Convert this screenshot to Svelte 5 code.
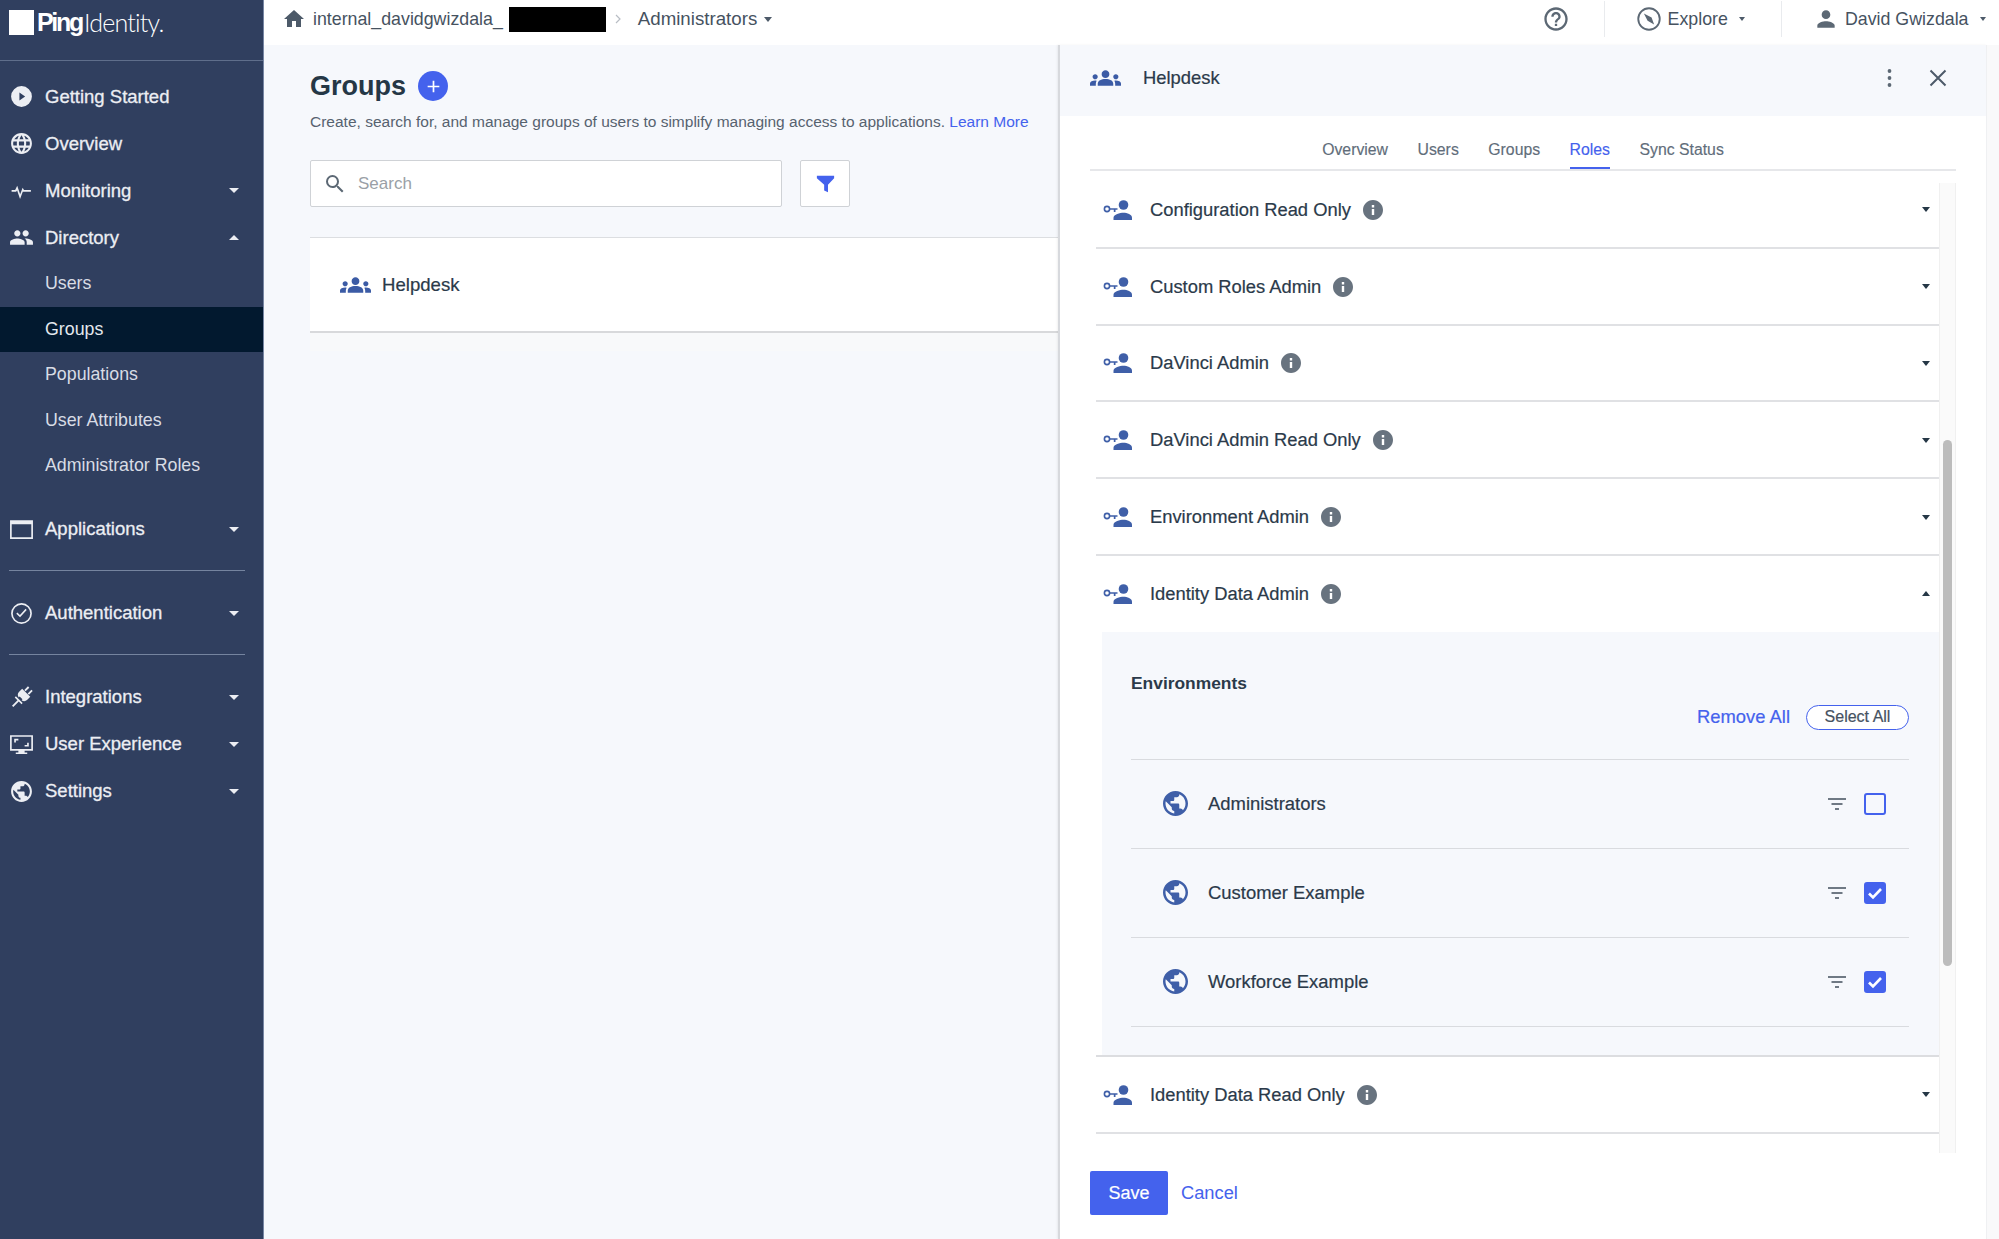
<script>
	const paths = {
		play: 'M12 2a10 10 0 1 0 0 20 10 10 0 0 0 0-20zM10 8.2v7.6l5.5-3.8z',
		language:
			'M11.99 2C6.47 2 2 6.48 2 12s4.47 10 9.99 10C17.52 22 22 17.52 22 12S17.52 2 11.99 2zm6.93 6h-2.95c-.32-1.25-.78-2.45-1.38-3.56 1.84.63 3.37 1.91 4.33 3.56zM12 4.04c.83 1.2 1.48 2.53 1.91 3.96h-3.82c.43-1.43 1.08-2.76 1.91-3.96zM4.26 14C4.1 13.36 4 12.69 4 12s.1-1.36.26-2h3.38c-.08.66-.14 1.32-.14 2 0 .68.06 1.34.14 2H4.26zm.82 2h2.95c.32 1.25.78 2.45 1.38 3.56-1.84-.63-3.37-1.9-4.33-3.56zm2.95-8H5.08c.96-1.66 2.49-2.93 4.33-3.56C8.81 5.55 8.35 6.75 8.03 8zM12 19.96c-.83-1.2-1.48-2.53-1.91-3.96h3.82c-.43 1.43-1.08 2.76-1.91 3.96zM14.34 14H9.66c-.09-.66-.16-1.32-.16-2 0-.68.07-1.35.16-2h4.68c.09.65.16 1.32.16 2 0 .68-.07 1.34-.16 2zm.25 5.56c.6-1.11 1.06-2.31 1.38-3.56h2.95c-.96 1.65-2.49 2.93-4.33 3.56zM16.36 14c.08-.66.14-1.32.14-2 0-.68-.06-1.34-.14-2h3.38c.16.64.26 1.31.26 2s-.1 1.36-.26 2h-3.38z',
		pulse: 'M2.5 11.4h3.4l2-3.9 2.8 8.2 2.4-6.4 1.3 2.1h6.6v1.8h-7.6l-.1-.2-2.7 7.2-2.8-8.2-1 1.2H2.5z',
		people:
			'M16 11c1.66 0 2.99-1.34 2.99-3S17.66 5 16 5c-1.66 0-3 1.34-3 3s1.34 3 3 3zm-8 0c1.66 0 2.99-1.34 2.99-3S9.66 5 8 5C6.34 5 5 6.34 5 8s1.34 3 3 3zm0 2c-2.33 0-7 1.17-7 3.5V19h14v-2.5c0-2.33-4.67-3.5-7-3.5zm8 0c-.29 0-.62.02-.97.05 1.16.84 1.97 1.97 1.97 3.45V19h6v-2.5c0-2.33-4.67-3.5-7-3.5z',
		window: 'M1 3h22v18H1zM2.6 7v12.4h18.8V7z',
		check: 'M12 2a10 10 0 1 0 0 20 10 10 0 0 0 0-20zm0 1.6a8.4 8.4 0 1 1 0 16.8 8.4 8.4 0 0 1 0-16.8zM17 8.6l-6.4 7-3.6-3.4 1-1.1 2.5 2.3 5.4-5.9z',
		plug: 'M8.8 0h1.8v5h-1.8zM13.4 0h1.8v5h-1.8zM6.5 5.6h11V10c0 2-1.6 3.6-3.6 3.8v-1.2h-3.8v1.2C8.1 13.6 6.5 12 6.5 10zM7.4 15h9.2v1.6h-3.7V24h-1.8v-7.4H7.4z',
		monitor:
			'M1 3h22v15h-8v1.6h2.5V21h-11v-1.4H9V18H1zm1.6 1.6v11.8h18.8V4.6zM5 6.5h4v1.6H6.6v2H5zM19 14h-4v-1.6h2.4v-2H19z',
		earth:
			'M12 2C6.48 2 2 6.48 2 12s4.48 10 10 10 10-4.48 10-10S17.52 2 12 2zm-1 17.93c-3.95-.49-7-3.85-7-7.93 0-.62.08-1.21.21-1.79L9 15v1c0 1.1.9 2 2 2v1.93zm6.9-2.54c-.26-.81-1-1.39-1.9-1.39h-1v-3c0-.55-.45-1-1-1H8v-2h2c.55 0 1-.45 1-1V7h2c1.1 0 2-.9 2-2v-.41c2.93 1.19 5 4.06 5 7.41 0 2.08-.8 3.97-2.1 5.39z',
		home: 'M10 20v-6h4v6h5v-8h3L12 3 2 12h3v8z',
		help: 'M11 18h2v-2h-2v2zm1-16C6.48 2 2 6.48 2 12s4.48 10 10 10 10-4.48 10-10S17.52 2 12 2zm0 18c-4.41 0-8-3.59-8-8s3.59-8 8-8 8 3.59 8 8-3.59 8-8 8zm0-14c-2.21 0-4 1.79-4 4h2c0-1.1.9-2 2-2s2 .9 2 2c0 2-3 1.75-3 5h2c0-2.25 3-2.5 3-5 0-2.21-1.79-4-4-4z',
		compass:
			'M12 2a10 10 0 1 0 0 20 10 10 0 0 0 0-20zm0 1.6a8.4 8.4 0 1 1 0 16.8 8.4 8.4 0 0 1 0-16.8zM7.6 7.2l6.6 3.6 2.2 6-5.6-3.4z',
		person: 'M12 12c2.21 0 4-1.79 4-4s-1.79-4-4-4-4 1.79-4 4 1.79 4 4 4zm0 2c-2.67 0-8 1.34-8 4v2h16v-2c0-2.66-5.33-4-8-4z',
		group:
			'M12 12.75c1.63 0 3.07.39 4.24.9 1.08.48 1.76 1.56 1.76 2.73V18H6v-1.61c0-1.18.68-2.26 1.76-2.73 1.17-.52 2.61-.91 4.24-.91zM4 13c1.1 0 2-.9 2-2s-.9-2-2-2-2 .9-2 2 .9 2 2 2zm1.13 1.1c-.37-.06-.74-.1-1.13-.1-.99 0-1.93.21-2.78.58C.48 14.9 0 15.62 0 16.43V18h4.5v-1.61c0-.83.23-1.61.63-2.29zM20 13c1.1 0 2-.9 2-2s-.9-2-2-2-2 .9-2 2 .9 2 2 2zm4 3.43c0-.81-.48-1.53-1.22-1.85-.85-.37-1.79-.58-2.78-.58-.39 0-.76.04-1.13.1.4.68.63 1.46.63 2.29V18H24v-1.57zM12 6c1.66 0 3 1.34 3 3s-1.34 3-3 3-3-1.34-3-3 1.34-3 3-3z',
		info: 'M12 2C6.48 2 2 6.48 2 12s4.48 10 10 10 10-4.48 10-10S17.52 2 12 2zm1.2 15h-2.4v-6h2.4v6zm0-7.6h-2.4V7h2.4v2.4z',
		funnel: 'M3 4h18v2.6l-6.4 6.6V21l-4 -1.8v-6L3 6.6z',
		search: 'M15.5 14h-.79l-.28-.27A6.47 6.47 0 0 0 16 9.5 6.5 6.5 0 1 0 9.5 16c1.61 0 3.09-.59 4.23-1.57l.27.28v.79l5 4.99L20.49 19l-4.99-5zm-6 0C7.01 14 5 11.99 5 9.5S7.01 5 9.5 5 14 7.01 14 9.5 11.99 14 9.5 14z'
	};

	const topNav = [
		{ label: 'Getting Started', icon: 'play' },
		{ label: 'Overview', icon: 'language' },
		{ label: 'Monitoring', icon: 'pulse', caret: true },
		{ label: 'Directory', icon: 'people', caret: true, open: true }
	];
	const directory = ['Users', 'Groups', 'Populations', 'User Attributes', 'Administrator Roles'];
	const lowerNav = [
		{ label: 'Integrations', icon: 'plug', rotate: true, caret: true },
		{ label: 'User Experience', icon: 'monitor', caret: true },
		{ label: 'Settings', icon: 'earth', caret: true }
	];

	const tabs = ['Overview', 'Users', 'Groups', 'Roles', 'Sync Status'];
	const rolesAbove = [
		'Configuration Read Only',
		'Custom Roles Admin',
		'DaVinci Admin',
		'DaVinci Admin Read Only',
		'Environment Admin'
	];
	const environments = [
		{ name: 'Administrators', checked: false },
		{ name: 'Customer Example', checked: true },
		{ name: 'Workforce Example', checked: true }
	];
</script>

{#snippet icon(name, cls)}
	<svg class={cls} viewBox="0 0 24 24" aria-hidden="true"><path fill-rule="evenodd" d={paths[name]} /></svg>
{/snippet}

{#snippet navRow(item)}
	<div class="nav-row">
		<svg class="nav-icon" viewBox="0 0 24 24" aria-hidden="true">
			<path fill-rule="evenodd" d={paths[item.icon]} transform={item.rotate ? 'rotate(45 12 12)' : undefined} />
		</svg>
		<span>{item.label}</span>
		{#if item.caret}
			<i class="caret light" class:up={item.open}></i>
		{/if}
	</div>
{/snippet}

{#snippet roleRow(name, open)}
	<div class="role-row">
		<svg class="role-icon" viewBox="0 0 29 20" aria-hidden="true">
			<circle cx="4" cy="9" r="2.6" fill="none" stroke="currentColor" stroke-width="1.6" />
			<path d="M6.5 8.2h8v1.6h-2v2.2h-1.7V9.8H6.5z" />
			<circle cx="20.5" cy="5" r="4.8" />
			<path d="M10.5 20v-2.2c0-3.2 6.5-5 10-5s8.5 1.8 8.5 5V20z" />
		</svg>
		<span class="role-name">{name}</span>
		<svg class="info" viewBox="2 2 20 20" aria-hidden="true"><path fill-rule="evenodd" d={paths.info} /></svg>
		<i class="caret dark" class:up={open}></i>
	</div>
{/snippet}

<div class="app">
	<aside class="sidebar">
		<div class="logo">
			<span class="logo-mark"></span>
			<span class="logo-ping">Ping</span><span class="logo-identity">Identity.</span>
		</div>

		<nav>
			{#each topNav as item}
				{@render navRow(item)}
			{/each}
			{#each directory as sub}
				<div class="sub-row" class:active={sub === 'Groups'}>{sub}</div>
			{/each}

			<div class="nav-block">
				{@render navRow({ label: 'Applications', icon: 'window', caret: true })}
			</div>
			<hr />
			{@render navRow({ label: 'Authentication', icon: 'check', caret: true })}
			<hr />
			{#each lowerNav as item}
				{@render navRow(item)}
			{/each}
		</nav>
	</aside>

	<div class="main">
		<header class="topbar">
			{@render icon('home', 'home')}
			<span class="crumb">internal_davidgwizdala_</span>
			<span class="redacted"></span>
			<svg class="chevron" viewBox="0 0 6 10" aria-hidden="true"><path d="M1 1l4 4-4 4" /></svg>
			<span class="crumb env">Administrators</span>
			<i class="caret grey"></i>

			<div class="top-right">
				{@render icon('help', 'top-icon')}
				<span class="top-sep"></span>
				{@render icon('compass', 'top-icon explore-icon')}
				<span class="crumb explore">Explore</span>
				<i class="caret tiny"></i>
				<span class="top-sep second"></span>
				{@render icon('person', 'user-icon')}
				<span class="crumb user">David Gwizdala</span>
				<i class="caret tiny"></i>
			</div>
		</header>

		<div class="body">
			<section class="groups">
				<div class="title-row">
					<h1>Groups</h1>
					<span class="add">
						<svg viewBox="0 0 16 16" aria-hidden="true"><path d="M8 2.5v11M2.5 8h11" /></svg>
					</span>
				</div>
				<p class="desc">
					Create, search for, and manage groups of users to simplify managing access to applications.
					<a href="#learn">Learn More</a>
				</p>
				<div class="search-row">
					<label class="search">
						{@render icon('search', 'search-icon')}
						<input type="text" placeholder="Search" />
					</label>
					<button class="filter" aria-label="Filter">
						{@render icon('funnel', 'funnel')}
					</button>
				</div>
				<div class="card">
					<svg class="group-icon" viewBox="0 5.5 24 13" aria-hidden="true"><path d={paths.group} /></svg>
					<span>Helpdesk</span>
				</div>
				<div class="card-foot"></div>
			</section>

			<section class="panel">
				<div class="panel-head">
					<svg class="group-icon" viewBox="0 5.5 24 13" aria-hidden="true"><path d={paths.group} /></svg>
					<span class="panel-title">Helpdesk</span>
					<svg class="kebab" viewBox="0 0 4 20" aria-hidden="true">
						<circle cx="2" cy="3" r="1.9" /><circle cx="2" cy="10" r="1.9" /><circle cx="2" cy="17" r="1.9" />
					</svg>
					<svg class="close" viewBox="0 0 18 18" aria-hidden="true"><path d="M1.5 1.5l15 15M16.5 1.5l-15 15" /></svg>
				</div>

				<div class="tabs">
					{#each tabs as tab}
						<span class="tab" class:current={tab === 'Roles'}>{tab}</span>
					{/each}
				</div>

				<div class="scroller">
					<div class="roles">
						{#each rolesAbove as role}
							{@render roleRow(role, false)}
						{/each}

						<div class="role-open">
							{@render roleRow('Identity Data Admin', true)}
							<div class="env-box">
								<h2>Environments</h2>
								<div class="env-actions">
									<a href="#remove">Remove All</a>
									<span class="pill">Select All</span>
								</div>
								{#each environments as env}
									<div class="env-row">
										<svg class="globe" viewBox="2 2 20 20" aria-hidden="true"><path d={paths.earth} /></svg>
										<span class="env-name">{env.name}</span>
										<svg class="lines" viewBox="0 0 18 12" aria-hidden="true"><path d="M0 1h18M3.5 6h11M7 11h4" /></svg>
										<span class="box" class:checked={env.checked}>
											{#if env.checked}
												<svg viewBox="0 0 22 22" aria-hidden="true"><path d="M5 11.5l4 4 8-8.5" /></svg>
											{/if}
										</span>
									</div>
								{/each}
							</div>
						</div>

						{@render roleRow('Identity Data Read Only', false)}
					</div>
					<div class="track"><div class="thumb"></div></div>
				</div>

				<div class="actions">
					<button class="save">Save</button>
					<a href="#cancel">Cancel</a>
				</div>
			</section>

			<div class="edge"></div>
		</div>
	</div>
</div>

<style>
	:global(body) {
		margin: 0;
		background: #f6f8fc;
	}

	.app {
		display: flex;
		height: 1239px;
		overflow: hidden;
		font-family: 'Liberation Sans', Arial, sans-serif;
		color: #2b3a4a;
	}

	/* sidebar */
	.sidebar {
		width: 263px;
		flex: none;
		background: #303f5f;
		border-right: 1px solid #7786a3;
		color: #eceef3;
	}

	.logo {
		height: 61px;
		box-sizing: border-box;
		border-bottom: 1px solid #5f6e8b;
		padding: 10px 0 0 9px;
		display: flex;
		align-items: flex-start;
		color: #fff;
		line-height: 25px;
		font-size: 25px;
	}

	.logo-mark {
		width: 25px;
		height: 25px;
		background: #fff;
		margin-right: 3px;
	}

	.logo-ping {
		font-weight: 700;
		letter-spacing: -2.3px;
		margin-right: 2px;
	}

	.logo-identity {
		font-family: Lato, sans-serif;
		font-weight: 300;
		letter-spacing: -0.8px;
	}

	nav {
		padding-top: 12.4px;
	}

	.nav-row {
		height: 47px;
		display: flex;
		align-items: center;
		padding: 0 24px 0 9px;
		font-size: 18.5px;
		-webkit-text-stroke: 0.3px currentColor;
	}

	.nav-row span {
		margin-left: 11px;
		flex: 1;
	}

	.nav-icon {
		width: 25px;
		height: 25px;
		fill: #eceef3;
	}

	.sub-row {
		height: 45.4px;
		line-height: 45.4px;
		padding-left: 45px;
		font-size: 17.8px;
		color: #d8dce5;
	}

	.sub-row.active {
		background: #02192f;
		color: #e4e8ee;
	}

	.nav-block {
		margin-top: 17.5px;
	}

	hr {
		border: 0;
		height: 1px;
		background: #75849f;
		margin: 17.5px 18px 18.5px 9px;
	}

	.caret {
		display: inline-block;
		width: 0;
		height: 0;
		border-left: 5px solid transparent;
		border-right: 5px solid transparent;
		border-top: 5px solid currentColor;
		flex: none;
	}

	.caret.up {
		border-top: 0;
		border-bottom: 5px solid currentColor;
	}

	.caret.light {
		color: #eceef3;
	}

	.caret.dark {
		color: #253746;
		border-left-width: 4.5px;
		border-right-width: 4.5px;
		margin-left: auto;
		margin-right: 9px;
	}

	.caret.grey {
		color: #4d5a69;
		margin-left: 7px;
		border-left-width: 4.5px;
		border-right-width: 4.5px;
	}

	.caret.tiny {
		color: #4d5a69;
		border-left-width: 3.5px;
		border-right-width: 3.5px;
		border-top-width: 4px;
	}

	/* main column */
	.main {
		flex: 1;
		min-width: 0;
		display: flex;
		flex-direction: column;
	}

	.topbar {
		height: 45px;
		flex: none;
		background: #fff;
		display: flex;
		align-items: center;
		padding: 0 13.5px 7px 18px;
		box-sizing: border-box;
	}

	.home {
		width: 24px;
		height: 24px;
		fill: #4d5a69;
		margin-right: 7px;
	}

	.crumb {
		font-size: 17.8px;
		color: #46525f;
		white-space: nowrap;
	}

	.crumb.env {
		font-size: 18.7px;
	}

	.redacted {
		width: 97px;
		height: 25px;
		background: #000;
		margin-left: 6px;
	}

	.chevron {
		width: 6px;
		height: 10px;
		margin: 0 17px 0 9px;
		fill: none;
		stroke: #b8bdc4;
		stroke-width: 1.2;
	}

	.top-right {
		margin-left: auto;
		display: flex;
		align-items: center;
	}

	.top-icon {
		width: 28px;
		height: 28px;
		fill: #5c6874;
	}

	.top-sep {
		width: 1px;
		height: 36px;
		background: #e9ebee;
		margin: 0 30.4px 0 34px;
	}

	.top-sep.second {
		margin: 0 31px 0 36.5px;
	}

	.explore {
		margin: 0 11px 0 4.6px;
	}

	.user-icon {
		width: 26px;
		height: 26px;
		fill: #5c6874;
		margin-right: 5.6px;
	}

	.user {
		margin-right: 11px;
	}

	.body {
		flex: 1;
		display: flex;
		min-height: 0;
	}

	/* groups list */
	.groups {
		width: 794px;
		flex: none;
		box-sizing: border-box;
		padding: 24px 0 0 46px;
	}

	.title-row {
		display: flex;
		align-items: center;
		height: 34px;
	}

	h1 {
		margin: 0;
		font-size: 27px;
		line-height: 34px;
		font-weight: 700;
		color: #253746;
	}

	.add {
		width: 30px;
		height: 30px;
		border-radius: 50%;
		background: #4462ed;
		margin-left: 12px;
		display: flex;
		align-items: center;
		justify-content: center;
	}

	.add svg {
		width: 17px;
		height: 17px;
		fill: none;
		stroke: #fff;
		stroke-width: 1.6;
	}

	.desc {
		margin: 9px 0 0;
		font-size: 15.5px;
		line-height: 20px;
		color: #56626f;
		white-space: nowrap;
	}

	a {
		color: #4462ed;
		text-decoration: none;
	}

	.search-row {
		display: flex;
		gap: 18px;
		margin-top: 28px;
	}

	.search {
		width: 472px;
		height: 47px;
		box-sizing: border-box;
		background: #fff;
		border: 1px solid #cfd2d6;
		border-radius: 2px;
		display: flex;
		align-items: center;
		padding-left: 12px;
	}

	.search-icon {
		width: 24px;
		height: 24px;
		fill: #5c6874;
		flex: none;
	}

	.search input {
		border: 0;
		outline: 0;
		background: none;
		margin-left: 11px;
		padding: 0;
		font: 17px 'Liberation Sans', Arial, sans-serif;
		flex: 1;
		min-width: 0;
	}

	.search input::placeholder {
		color: #9a9fa6;
		opacity: 1;
	}

	.filter {
		width: 50px;
		height: 47px;
		padding: 0;
		background: #fff;
		border: 1px solid #cfd2d6;
		border-radius: 2px;
		display: flex;
		align-items: center;
		justify-content: center;
	}

	.funnel {
		width: 23px;
		height: 23px;
		fill: #4462ed;
	}

	.card {
		margin-top: 30px;
		height: 96px;
		box-sizing: border-box;
		background: #fff;
		border-top: 1px solid #dcdee1;
		border-bottom: 2px solid #d8d9db;
		display: flex;
		align-items: center;
		padding-left: 30px;
		gap: 11px;
		font-size: 18.6px;
		-webkit-text-stroke: 0.2px currentColor;
	}

	.card-foot {
		height: 18px;
		background: #f8f9fa;
	}

	.group-icon {
		width: 31px;
		height: 18px;
		fill: #3b5ba5;
		flex: none;
	}

	/* detail panel */
	.panel {
		width: 929px;
		flex: none;
		box-sizing: border-box;
		background: #fff;
		border-left: 2px solid #d7d9dd;
		border-right: 1px solid #eff0f2;
		box-shadow: -1px 0 2px rgba(0, 0, 0, 0.06);
		display: flex;
		flex-direction: column;
		min-height: 0;
	}

	.panel-head {
		height: 71px;
		flex: none;
		background: #f6f8fc;
		display: flex;
		align-items: center;
		padding: 0 39px 5px 30px;
		box-sizing: border-box;
	}

	.panel-title {
		margin-left: 22px;
		font-size: 18.4px;
		-webkit-text-stroke: 0.2px currentColor;
		flex: 1;
	}

	.kebab {
		width: 5px;
		height: 20px;
		fill: #5c6874;
		margin-right: 37px;
	}

	.close {
		width: 18px;
		height: 18px;
		fill: none;
		stroke: #4d5a69;
		stroke-width: 2;
	}

	.tabs {
		height: 55px;
		flex: none;
		box-sizing: border-box;
		margin: 0 30px;
		border-bottom: 2px solid #e6e7ea;
		display: flex;
		justify-content: center;
		gap: 29.5px;
		padding-top: 24px;
		font-size: 15.8px;
		color: #616d7a;
		-webkit-text-stroke: 0.15px currentColor;
	}

	.tab {
		height: 29px;
		line-height: 20px;
		box-sizing: border-box;
	}

	.tab.current {
		color: #4462ed;
		border-bottom: 2px solid #4462ed;
	}

	.scroller {
		height: 981px;
		flex: none;
		margin-top: 1px;
		padding-left: 36px;
		display: flex;
		overflow: hidden;
	}

	.roles {
		width: 843px;
		flex: none;
	}

	.role-row {
		height: 76.8px;
		box-sizing: border-box;
		border-bottom: 2px solid #e0e1e4;
		display: flex;
		align-items: center;
		padding: 1px 0 0 7px;
		font-size: 18.35px;
		-webkit-text-stroke: 0.2px currentColor;
	}

	.role-open .role-row {
		height: 76px;
		border-bottom: 0;
		padding-top: 0;
	}

	.role-icon {
		width: 29px;
		height: 20px;
		fill: #3f5fa8;
		color: #3f5fa8;
		flex: none;
		margin-right: 18px;
	}

	.info {
		width: 20px;
		height: 20px;
		fill: #68737f;
		margin-left: 12px;
		flex: none;
	}

	.env-box {
		margin-left: 6px;
		background: #f6f8fc;
		height: 423px;
		box-sizing: border-box;
		padding: 39px 30px 0 29px;
	}

	.role-open {
		border-bottom: 2px solid #dcdde0;
	}

	h2 {
		margin: 0;
		font-size: 17.4px;
		line-height: 24px;
		font-weight: 700;
		color: #2b3a4a;
	}

	.env-actions {
		margin-top: 10px;
		margin-bottom: 29px;
		display: flex;
		justify-content: flex-end;
		align-items: center;
		gap: 16px;
		font-size: 18.4px;
		-webkit-text-stroke: 0.2px currentColor;
	}

	.pill {
		width: 103px;
		height: 25px;
		box-sizing: border-box;
		border: 1.5px solid #4462ed;
		border-radius: 13px;
		background: #fff;
		text-align: center;
		line-height: 22px;
		font-size: 16px;
		color: #46525f;
		-webkit-text-stroke: 0.2px #46525f;
	}

	.env-row {
		height: 88.8px;
		box-sizing: border-box;
		border-bottom: 1px solid #d9dbdf;
		display: flex;
		align-items: center;
		padding: 0 23px 0 32px;
		font-size: 18.45px;
	}

	.env-actions + .env-row {
		border-top: 1px solid #d9dbdf;
		height: 90px;
	}

	.globe {
		width: 25px;
		height: 25px;
		fill: #3f5fa8;
		flex: none;
		margin-right: 20px;
	}

	.env-name {
		flex: 1;
		-webkit-text-stroke: 0.2px currentColor;
	}

	.lines {
		width: 18px;
		height: 12px;
		fill: none;
		stroke: #6f7984;
		stroke-width: 2;
		margin-right: 18px;
	}

	.box {
		width: 22px;
		height: 22px;
		box-sizing: border-box;
		border: 2px solid #4462ed;
		border-radius: 3px;
		flex: none;
		position: relative;
	}

	.box.checked {
		background: #4462ed;
	}

	.box svg {
		position: absolute;
		inset: -2px;
		fill: none;
		stroke: #fff;
		stroke-width: 2.6;
	}

	.track {
		width: 17px;
		flex: none;
		margin-top: 11px;
		box-sizing: border-box;
		background: #fafafa;
		border-left: 1px solid #f0f0f0;
		border-right: 1px solid #f0f0f0;
		padding: 257px 3px 0;
	}

	.thumb {
		height: 526px;
		border-radius: 5px;
		background: #bcbcbc;
	}

	.actions {
		display: flex;
		align-items: center;
		gap: 13px;
		padding: 18px 0 0 30px;
		font-size: 18.3px;
	}

	.save {
		width: 78px;
		height: 44px;
		border: 0;
		padding: 0;
		border-radius: 2px;
		background: #4462ed;
		color: #fff;
		font: 18px 'Liberation Sans', Arial, sans-serif;
		-webkit-text-stroke: 0.2px #fff;
	}

	.edge {
		flex: 1;
		background: #f9f9fa;
	}
</style>
